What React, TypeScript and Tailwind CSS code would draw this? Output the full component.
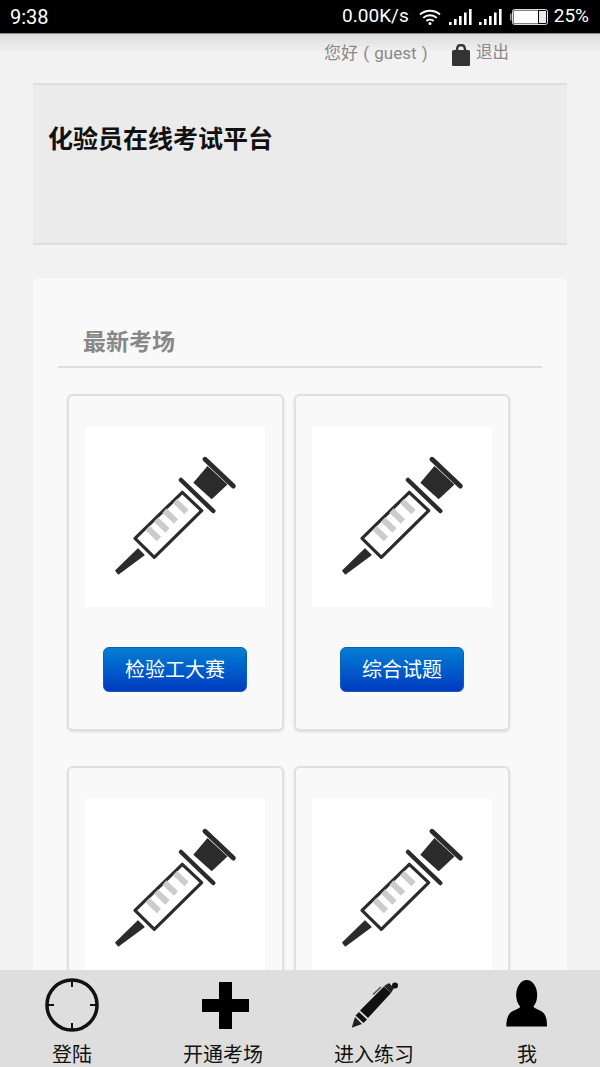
const CJK = "font-['Roboto','Noto_Sans_CJK_SC',sans-serif]";

function Syringe() {
  return (
    <svg viewBox="0 0 180 180" className="w-[180px] h-[180px] block">
      <path d="M120 32.3L148.3 59" stroke="#2b2b2b" strokeWidth="5" strokeLinecap="round" fill="none" />
      <polygon points="108.3,55.7 122.5,39 142.5,57.5 126.7,72.3" fill="#2b2b2b" />
      <path d="M96 53L128.3 84" stroke="#2b2b2b" strokeWidth="4.5" strokeLinecap="round" fill="none" />
      <polygon points="97.3,65.3 116.7,83.7 69.3,130.3 50,111.3" fill="none" stroke="#2b2b2b" strokeWidth="3.2" strokeLinejoin="round" />
      <path d="M90 74L101.5 85M79.5 83.5L91 94.5M71 92.5L82.5 103.5M62.5 101L74 112" stroke="#cccccc" strokeWidth="6" fill="none" />
      <polygon points="53,122 59,128 33.3,147 30.7,143.7" fill="#2b2b2b" stroke="#2b2b2b" strokeWidth="1.2" strokeLinejoin="round" />
    </svg>
  );
}

function ExamCard({ label, cardW, btnW }: { label?: string; cardW: string; btnW?: string }) {
  return (
    <div className={`${cardW} flex-none h-[337px] rounded-md border-2 border-[#e0e0e0] bg-[#f9f9f9] shadow-sm flex flex-col items-center pt-[31px]`}>
      <div className="bg-white">
        <Syringe />
      </div>
      {label && (
        <button className={`${btnW} mt-[40px] h-[45px] rounded-md border border-[#0a5fb8] bg-gradient-to-b from-[#0a7ed2] to-[#0039c0] text-white text-[20px] leading-[40px]`}>
          {label}
        </button>
      )}
    </div>
  );
}

function Wifi() {
  return (
    <svg viewBox="0 0 22 16" className="w-[22px] h-[16px]">
      <path d="M1 5.5C6.5 .5 15.5 .5 21 5.5M4.2 8.8C8 5.4 14 5.4 17.8 8.8M7.4 12C9.4 10.3 12.6 10.3 14.6 12" fill="none" stroke="#fff" strokeWidth="1.8" />
      <circle cx="11" cy="14.5" r="1.5" fill="#fff" />
    </svg>
  );
}

function Signal() {
  return (
    <svg viewBox="0 0 23 16" className="w-[23px] h-[16px]">
      <rect x="0" y="13" width="2.6" height="3" fill="#fff" />
      <rect x="5" y="10" width="2.6" height="6" fill="#fff" />
      <rect x="10" y="7" width="2.6" height="9" fill="#fff" />
      <rect x="15" y="3.5" width="2.6" height="12.5" fill="#fff" />
      <rect x="20" y="0" width="2.6" height="16" fill="#fff" />
    </svg>
  );
}

function Battery() {
  return (
    <svg viewBox="0 0 38 16" className="w-[38px] h-[16px]">
      <rect x="0" y="4.5" width="1.5" height="7" fill="#999" />
      <rect x="2.5" y=".5" width="35" height="15" rx="2" fill="#000" stroke="#ddd" />
      <rect x="3.5" y="1.5" width="24.5" height="13" fill="#fff" />
      <rect x="29" y="2" width="7" height="12" fill="#e8e8e8" />
    </svg>
  );
}

function Lock() {
  return (
    <svg viewBox="0 0 18 22" className="w-[18px] h-[22px] flex-none">
      <path d="M4.5 8L5.5 3.2C5.8 2 6.8 1.2 8 1.2H10C11.2 1.2 12.2 2 12.5 3.2L13.5 8" fill="none" stroke="#333" strokeWidth="2.4" />
      <rect x="0" y="6" width="18" height="16" rx="1.5" fill="#333" />
    </svg>
  );
}

function Crosshair() {
  return (
    <svg viewBox="0 0 54 54" className="w-[54px] h-[54px]">
      <circle cx="27" cy="27" r="25" fill="none" stroke="#111" strokeWidth="3.5" />
      <path d="M27 2V9M27 45V52M2 27H9M45 27H52" stroke="#111" strokeWidth="2" />
    </svg>
  );
}

function Plus() {
  return (
    <svg viewBox="0 0 47 47" className="w-[47px] h-[47px]">
      <path d="M17 0H30V17H47V30H30V47H17V30H0V17H17Z" fill="#000" />
    </svg>
  );
}

function Pen() {
  return (
    <svg viewBox="0 0 50 50" className="w-[50px] h-[50px]">
      <polygon points="1.7,47.7 5,37 12,44" fill="#222" />
      <polygon points="5.5,35.5 9,32 17,39.5 13.5,43" fill="#111" />
      <polygon points="10,30.5 34,6.5 41,13 18,38" fill="#111" />
      <polygon points="34,6 39,3 44,8 41,13" fill="#222" />
      <circle cx="45" cy="5.5" r="3" fill="#111" />
      <path d="M23 14.5L31 7" stroke="#555" strokeWidth="1.6" fill="none" />
    </svg>
  );
}

function UserIcon() {
  return (
    <svg viewBox="0 0 52 48" className="w-[52px] h-[48px]">
      <ellipse cx="26.7" cy="15" rx="10.5" ry="15" fill="#000" />
      <path d="M6.3 46.5C6.5 38 8 33 14 30.5C18 29 21 27.5 22 24H32C33 27.5 36 29 40 30.5C45.5 33 47 38 47 46.5Z" fill="#000" />
    </svg>
  );
}

function Tab({ label, w, children, extra = "", iconBox }: { label: string; w: string; children: React.ReactNode; extra?: string; iconBox: string }) {
  return (
    <div className={`${w} ${extra} flex-none flex flex-col items-center`}>
      <div className={`h-[74px] flex items-start justify-center ${iconBox}`}>{children}</div>
      <div className="text-[20px] leading-[23px] text-[#111] whitespace-nowrap">{label}</div>
    </div>
  );
}

export default function App() {
  return (
    <div className={`w-[600px] h-[1067px] flex flex-col overflow-hidden bg-[#f2f2f2] ${CJK}`}>
      <div className="flex-none h-[34px] bg-black border-b border-[#888] flex items-center text-white text-[19px] pl-[10px] pr-[11px]">
        <span className="text-[20px]">9:38</span>
        <span className="ml-auto">0.00K/s</span>
        <span className="ml-[10px]"><Wifi /></span>
        <span className="ml-[8px]"><Signal /></span>
        <span className="ml-[7px]"><Signal /></span>
        <span className="ml-[8px]"><Battery /></span>
        <span className="ml-[6px]">25%</span>
      </div>

      <main className="flex-1 min-h-0 overflow-hidden bg-gradient-to-b from-[#dcdcdc] from-0% to-[#f2f2f2] to-[2%]">
        <div className="h-[49px] flex items-start pl-[324px] pt-[7px] text-[#888]">
          <span className="w-[104px] flex-none text-[17px] leading-[24px] whitespace-nowrap [word-spacing:1px]">您好 ( guest )</span>
          <span className="ml-[24px] mt-[3px]"><Lock /></span>
          <span className="ml-[6px] text-[16.5px] leading-[24px] whitespace-nowrap">退出</span>
        </div>

        <section className="mx-[33px] h-[162px] border-y-2 border-[#dedede] bg-[#ebebeb] pl-[15px] pt-[35px]">
          <h1 className="text-[25px] leading-[40px] font-semibold text-[#111]">化验员在线考试平台</h1>
        </section>

        <section className="mx-[33px] mt-[33px] rounded-md bg-[#f9f9f9] px-[25px] pt-[43px]">
          <h2 className="h-[47px] pl-[25px] pt-[2px] text-[23px] leading-[40px] font-bold text-[#888] border-b-2 border-[#dedede]">最新考场</h2>
          <div className="mt-[26px] ml-[9px] flex flex-col gap-[35px]">
            <div className="flex gap-[10px]">
              <ExamCard cardW="w-[217px] pr-[1px]" label="检验工大赛" btnW="w-[144px]" />
              <ExamCard cardW="w-[216px]" label="综合试题" btnW="w-[124px]" />
            </div>
            <div className="flex gap-[10px]">
              <ExamCard cardW="w-[217px] pr-[1px]" />
              <ExamCard cardW="w-[216px]" />
            </div>
          </div>
        </section>
      </main>

      <nav className="flex-none h-[97px] bg-[#dedede] flex overflow-hidden">
        <Tab label="登陆" w="w-[144px]" iconBox="pt-[8px]"><Crosshair /></Tab>
        <Tab label="开通考场" w="w-[158px]" iconBox="pt-[12px] pl-[4px]"><Plus /></Tab>
        <Tab label="进入练习" w="w-[144px]" iconBox="pt-[10px] pl-[2px]"><Pen /></Tab>
        <Tab label="我" w="w-[154px]" extra="pl-[8px]" iconBox="pt-[10px] pr-[2px]"><UserIcon /></Tab>
      </nav>
    </div>
  );
}
